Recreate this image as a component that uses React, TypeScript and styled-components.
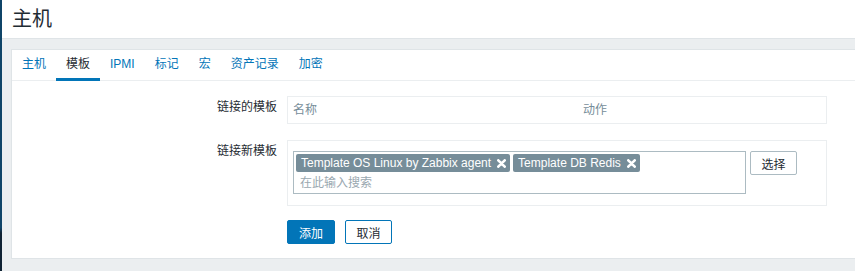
import React, { useState } from 'react';
import styled, { createGlobalStyle } from 'styled-components';

const GlobalStyle = createGlobalStyle`
	body {
		margin: 0;
		background: #ebeef0;
		font-family: "Liberation Sans", "Noto Sans CJK SC", sans-serif;
		font-size: 12px;
		color: #1f2c33;
		overflow: hidden;
	}
`;

type Tag = { id: number; name: string };

const tabs = ['主机', '模板', 'IPMI', '标记', '宏', '资产记录', '加密'];

const CloseIcon = () => (
	<svg width="9" height="9" viewBox="0 0 9 9">
		<path d="M1.3 1.3 L7.7 7.7 M7.7 1.3 L1.3 7.7" stroke="#fff" strokeWidth="2.6" strokeLinecap="round" />
	</svg>
);

const App: React.FC = () => {
	const [active, setActive] = useState(1);
	const [tags, setTags] = useState<Tag[]>([
		{ id: 1, name: 'Template OS Linux by Zabbix agent' },
		{ id: 2, name: 'Template DB Redis' },
	]);

	return (
		<Shell>
			<GlobalStyle />
			<SideEdge />
			<Main>
				<Header>
					<Title>主机</Title>
				</Header>
				<Content>
					<Card>
						<TabBar>
							{tabs.map((t, i) => (
								<TabItem key={t} $active={i === active} onClick={() => setActive(i)}>
									{t}
								</TabItem>
							))}
						</TabBar>
						<Form>
							<FormRow $gap={16}>
								<Label>链接的模板</Label>
								<Box $pad="4px 5px">
									<ColHead $width={290}>名称</ColHead>
									<ColHead>动作</ColHead>
								</Box>
							</FormRow>
							<FormRow $gap={14}>
								<Label>链接新模板</Label>
								<Box $pad="10px 5px 11px 5px">
									<MultiSelect>
										<TagList>
											{tags.map((t) => (
												<TagChip key={t.id}>
													<span>{t.name}</span>
													<TagClose onClick={() => setTags(tags.filter((x) => x.id !== t.id))}>
														<CloseIcon />
													</TagClose>
												</TagChip>
											))}
										</TagList>
										<SearchInput placeholder="在此输入搜索" />
									</MultiSelect>
									<SelectButton>选择</SelectButton>
								</Box>
							</FormRow>
							<FormRow $gap={0}>
								<div />
								<Actions>
									<PrimaryButton>添加</PrimaryButton>
									<AltButton>取消</AltButton>
								</Actions>
							</FormRow>
						</Form>
					</Card>
				</Content>
			</Main>
		</Shell>
	);
};

const Shell = styled.div`
	display: flex;
	height: 271px;
`;

const SideEdge = styled.div`
	width: 2px;
	flex-shrink: 0;
	background: linear-gradient(to bottom, #0f4468 0%, #0f4468 84%, #0f2233 86%, #0f2233 100%);
`;

const Main = styled.div`
	flex: 1;
	min-width: 0;
	display: flex;
	flex-direction: column;
`;

const Header = styled.div`
	height: 38px;
	background: #fff;
	border-bottom: 1px solid #dfe4e7;
	padding-left: 10px;
	display: flex;
	align-items: center;
`;

const Title = styled.h1`
	margin: 0;
	font-size: 20px;
	font-weight: normal;
	line-height: 34px;
	color: #1f2c33;
`;

const Content = styled.div`
	padding: 10px 0 0 9px;
`;

const Card = styled.div`
	background: #fff;
	border: 1px solid #dfe4e7;
	border-right: none;
	padding-bottom: 14px;
`;

const TabBar = styled.div`
	display: flex;
	border-bottom: 1px solid #ebeef0;
	height: 30px;
`;

const TabItem = styled.div<{ $active: boolean }>`
	padding: 0 10px;
	height: 28px;
	line-height: 28px;
	font-size: 12px;
	cursor: pointer;
	color: ${(p) => (p.$active ? '#1f2c33' : '#0275b8')};
	border-bottom: 3px solid ${(p) => (p.$active ? '#0275b8' : 'transparent')};
`;

const Form = styled.div`
	padding-top: 15px;
`;

const FormRow = styled.div<{ $gap: number }>`
	display: grid;
	grid-template-columns: 265px 540px;
	column-gap: 10px;
	margin-bottom: ${(p) => p.$gap}px;
`;

const Label = styled.div`
	text-align: right;
	padding-top: 4px;
	line-height: 14px;
	color: #1f2c33;
`;

const Box = styled.div<{ $pad: string }>`
	display: flex;
	align-items: flex-start;
	border: 1px solid #ebeef0;
	padding: ${(p) => p.$pad};
	line-height: 18px;
`;

const ColHead = styled.div<{ $width?: number }>`
	color: #768d99;
	${(p) => (p.$width ? `width: ${p.$width}px;` : '')}
`;

const MultiSelect = styled.div`
	width: 449px;
	border: 1px solid #acbbc2;
	padding: 2px 0 1px 2px;
	background: #fff;
`;

const TagList = styled.div`
	display: flex;
	flex-wrap: wrap;
	gap: 3px;
	margin-bottom: 2px;
`;

const TagChip = styled.div`
	display: flex;
	align-items: center;
	height: 18px;
	padding: 0 4px 0 5px;
	background: #768d99;
	color: #fff;
	border-radius: 2px;
	font-size: 12px;
	line-height: 18px;
	white-space: nowrap;
`;

const TagClose = styled.span`
	display: flex;
	margin-left: 6px;
	cursor: pointer;
`;

const SearchInput = styled.input`
	display: block;
	width: 440px;
	height: 18px;
	border: none;
	outline: none;
	padding: 0 0 0 4px;
	font-family: inherit;
	font-size: 12px;
	color: #1f2c33;
	&::placeholder {
		color: #9aa8b0;
	}
`;

const SelectButton = styled.button`
	margin-left: 4px;
	width: 47px;
	height: 24px;
	background: #fff;
	border: 1px solid #acbbc2;
	border-radius: 2px;
	font-family: inherit;
	font-size: 12px;
	color: #1f2c33;
	padding: 0;
`;

const Actions = styled.div`
	display: flex;
	gap: 10px;
`;

const PrimaryButton = styled.button`
	width: 48px;
	height: 24px;
	background: #0275b8;
	border: 1px solid #0275b8;
	border-radius: 2px;
	color: #fff;
	font-family: inherit;
	font-size: 12px;
	padding: 0;
`;

const AltButton = styled(PrimaryButton)`
	width: 47px;
	background: #fff;
	color: #1f2c33;
`;

export default App;
